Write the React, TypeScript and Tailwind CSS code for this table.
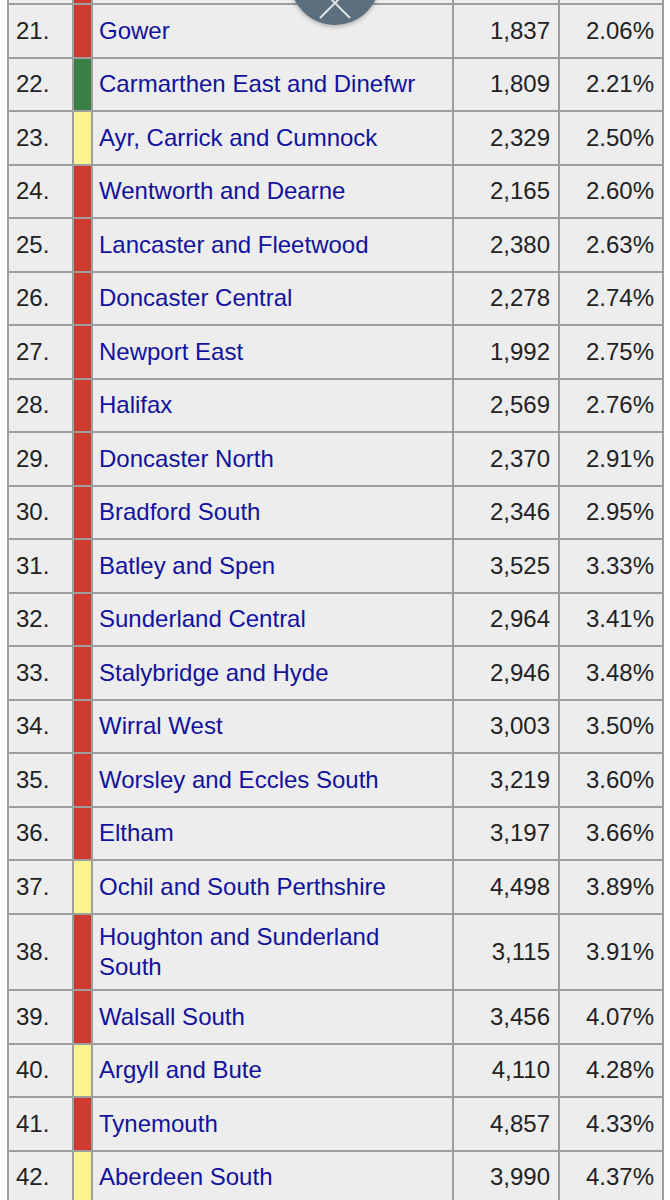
import React from 'react'

type Party = 'lab' | 'pc' | 'snp'

const rows: { n: number; party: Party; name: string; votes: string; pct: string }[] = [
  { n: 20, party: 'lab', name: '', votes: '', pct: '' },
  { n: 21, party: 'lab', name: 'Gower', votes: '1,837', pct: '2.06%' },
  { n: 22, party: 'pc', name: 'Carmarthen East and Dinefwr', votes: '1,809', pct: '2.21%' },
  { n: 23, party: 'snp', name: 'Ayr, Carrick and Cumnock', votes: '2,329', pct: '2.50%' },
  { n: 24, party: 'lab', name: 'Wentworth and Dearne', votes: '2,165', pct: '2.60%' },
  { n: 25, party: 'lab', name: 'Lancaster and Fleetwood', votes: '2,380', pct: '2.63%' },
  { n: 26, party: 'lab', name: 'Doncaster Central', votes: '2,278', pct: '2.74%' },
  { n: 27, party: 'lab', name: 'Newport East', votes: '1,992', pct: '2.75%' },
  { n: 28, party: 'lab', name: 'Halifax', votes: '2,569', pct: '2.76%' },
  { n: 29, party: 'lab', name: 'Doncaster North', votes: '2,370', pct: '2.91%' },
  { n: 30, party: 'lab', name: 'Bradford South', votes: '2,346', pct: '2.95%' },
  { n: 31, party: 'lab', name: 'Batley and Spen', votes: '3,525', pct: '3.33%' },
  { n: 32, party: 'lab', name: 'Sunderland Central', votes: '2,964', pct: '3.41%' },
  { n: 33, party: 'lab', name: 'Stalybridge and Hyde', votes: '2,946', pct: '3.48%' },
  { n: 34, party: 'lab', name: 'Wirral West', votes: '3,003', pct: '3.50%' },
  { n: 35, party: 'lab', name: 'Worsley and Eccles South', votes: '3,219', pct: '3.60%' },
  { n: 36, party: 'lab', name: 'Eltham', votes: '3,197', pct: '3.66%' },
  { n: 37, party: 'snp', name: 'Ochil and South Perthshire', votes: '4,498', pct: '3.89%' },
  { n: 38, party: 'lab', name: 'Houghton and Sunderland|South', votes: '3,115', pct: '3.91%' },
  { n: 39, party: 'lab', name: 'Walsall South', votes: '3,456', pct: '4.07%' },
  { n: 40, party: 'snp', name: 'Argyll and Bute', votes: '4,110', pct: '4.28%' },
  { n: 41, party: 'lab', name: 'Tynemouth', votes: '4,857', pct: '4.33%' },
  { n: 42, party: 'snp', name: 'Aberdeen South', votes: '3,990', pct: '4.37%' },
]

const partyBg: Record<Party, string> = {
  lab: 'bg-[#cc3a30]',
  pc: 'bg-[#3b7f47]',
  snp: 'bg-[#fcf48f]',
}

export default function App() {
  return (
    <div className="relative h-[1200px] overflow-hidden bg-white font-['Liberation_Sans',Arial,sans-serif] text-[24px] text-[#222]">
      {/* constituency table, scrolled so row 20 is just out of view */}
      <div className="mx-[7px] mt-[-50.5px] grid w-[657px] grid-cols-[63px_17px_359px_104px_102px] gap-[2px] border-2 border-[#9e9e9e] bg-[#9e9e9e]">
        {rows.map((r) => {
          const tall = r.n === 38
          const h = tall ? 'h-[74.5px]' : 'h-[51.5px]'
          const [l1, l2] = r.name.split('|')
          const hidden = r.n === 20
          return (
            <React.Fragment key={r.n}>
              <div className={`${h} flex items-center bg-[#ededed] pl-[7px]`}>{hidden ? '' : `${r.n}.`}</div>
              <div className={`${h} ${partyBg[r.party]}`} />
              <div className={`${h} flex items-center bg-[#ededed] pl-[6px] leading-[30px] text-[#12129c]`}>
                <span>
                  {l1}
                  {l2 && (
                    <>
                      <br />
                      {l2}
                    </>
                  )}
                </span>
              </div>
              <div className={`${h} flex items-center justify-end bg-[#ededed] pr-[8px]`}>{r.votes}</div>
              <div className={`${h} flex items-center justify-end bg-[#ededed] pr-[8px]`}>{r.pct}</div>
            </React.Fragment>
          )
        })}
      </div>

      {/* floating close button */}
      <div className="absolute left-[290px] top-[-65px] flex h-[90px] w-[90px] items-center justify-center rounded-full bg-[#5b6f7e] shadow-[0_2px_4px_rgba(0,0,0,0.25)]">
        <svg width="32" height="32" viewBox="0 0 32 32" className="mt-[45px]">
          <path d="M1 1 L31 31 M31 1 L1 31" stroke="#dfe3e6" strokeWidth="2" fill="none" />
        </svg>
      </div>
    </div>
  )
}
